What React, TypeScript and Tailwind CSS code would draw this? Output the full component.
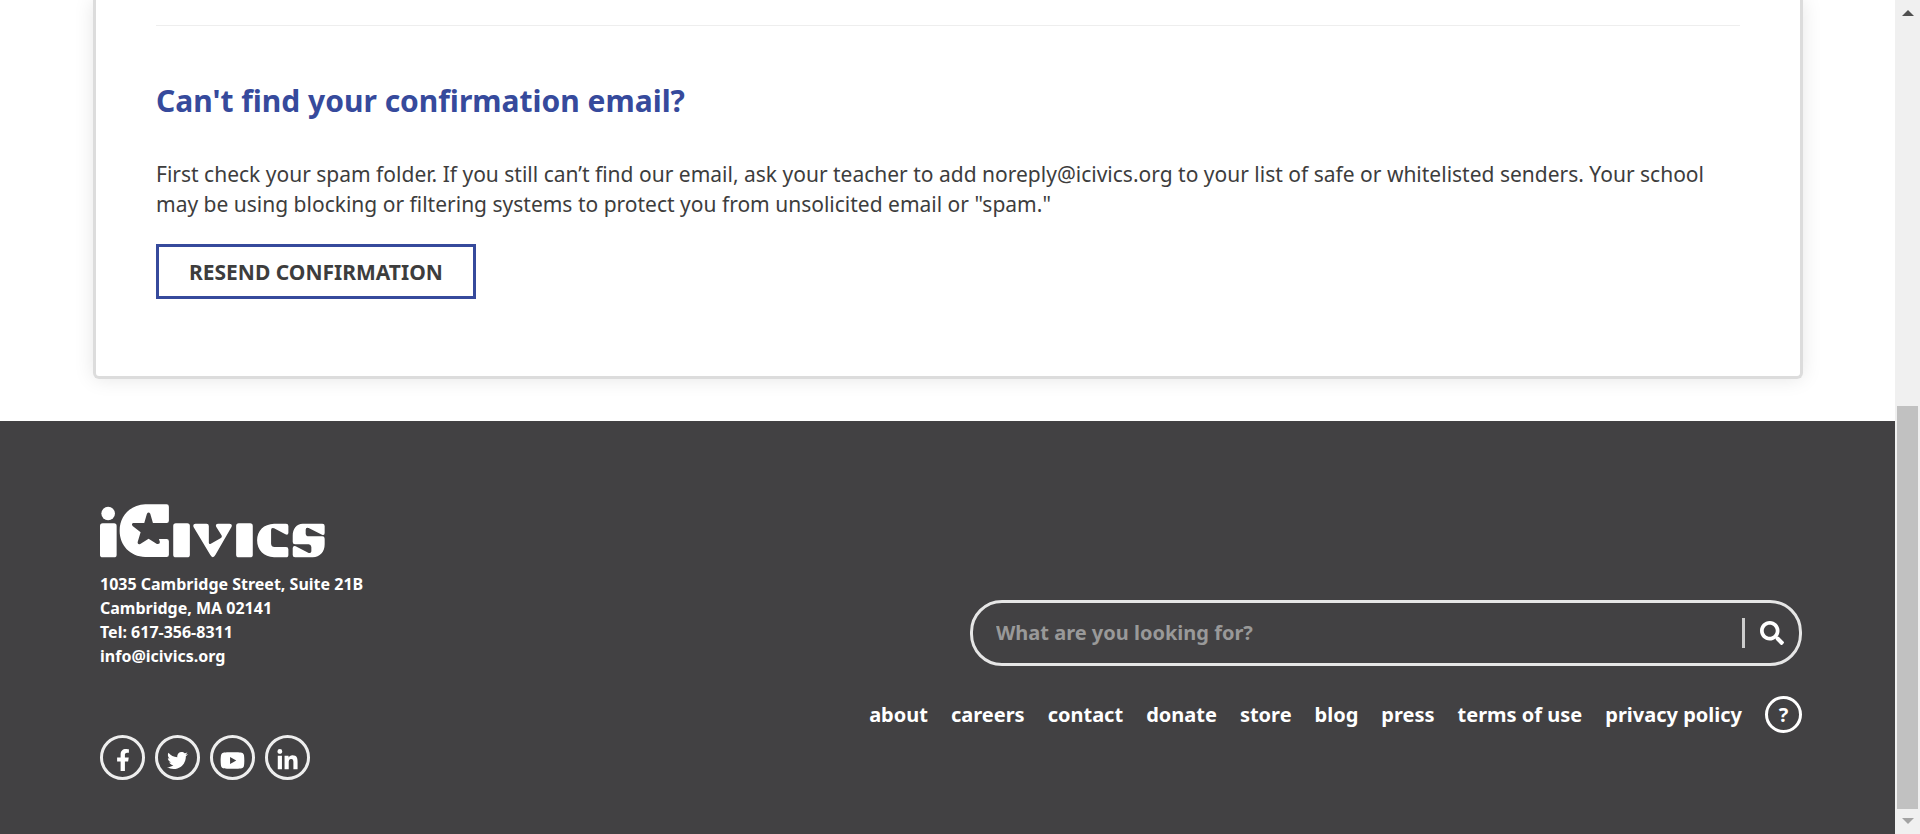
import React from "react";
import { FaFacebookF, FaTwitter, FaYoutube, FaLinkedinIn, FaSearch } from "react-icons/fa";

const navLinks = [
  "about",
  "careers",
  "contact",
  "donate",
  "store",
  "blog",
  "press",
  "terms of use",
  "privacy policy",
];

const socials = [
  { label: "Facebook", icon: <FaFacebookF className="size-[22px]" /> },
  { label: "Twitter", icon: <FaTwitter className="size-[21px]" /> },
  { label: "YouTube", icon: <FaYoutube className="size-[25px]" /> },
  { label: "LinkedIn", icon: <FaLinkedinIn className="size-[23px]" /> },
];

function Logo() {
  return (
    <svg viewBox="60 71 676 162" className="h-[54px] w-[225px]" fill="#fff" role="img" aria-label="iCivics">
      <circle cx="84.500" cy="99.500" r="20.500" />
      <rect x="60" y="129" width="50" height="102" rx="8" />
      <path
        fillRule="evenodd"
        d="M196 72H260Q267 72 267 79V121Q267 128 260 128H219L211 100Q206 93 201 100L193 128H160Q153 130 158 137L182 156L173 186Q173 194 181 191L206 175L231 191Q240 193 240 185L237 176H260Q267 176 267 183V223Q267 230 260 230H196C150 228 119 195 119 151C119 107 150 74 196 72Z"
      />
      <rect x="280" y="129" width="50" height="102" rx="8" />
      <path d="M347 130H380Q387 130 387 137V188Q388 193 393 190L422 174Q428 170 425 165L409 139Q406 130 414 130H449Q459 130 455 140L407 223Q399 238 391 223L341 140Q338 130 347 130Z" />
      <rect x="469" y="129" width="50" height="102" rx="8" />
      <path d="M583 130H619Q626 130 626 137V158Q625 166 617 162L583 144Q574 141 574 149V190Q575 200 584 200H619Q626 200 626 207V223Q626 231 619 231H583C552 230 532 209 532 180C532 151 552 131 583 130Z" />
      <path d="M669 130H728Q735 130 735 137V158Q735 166 727 163L687 143Q678 140 678 148V160Q679 168 687 168H728Q735 168 735 175V192C735 216 721 230 699 231H646Q639 231 639 224V203Q640 195 648 198L687 218Q695 220 695 213V200Q694 192 687 192H646Q639 192 639 185V166C639 145 650 131 669 130Z" />
    </svg>
  );
}

function Scrollbar() {
  return (
    <div aria-hidden="true" className="flex w-[25px] shrink-0 flex-col items-center bg-[#f0f0f0] pt-[10px] pb-[10px]">
      <svg viewBox="0 0 12 6" className="h-[6px] w-3" fill="#505050">
        <path d="M6 0L12 6H0Z" />
      </svg>
      <div className="grow-[390]" />
      <div className="w-[21px] grow-[403] bg-[#c1c1c1]" />
      <svg viewBox="0 0 12 6" className="mt-[9px] h-[6px] w-3" fill="#a3a3a3">
        <path d="M0 0H12L6 6Z" />
      </svg>
    </div>
  );
}

export default function App() {
  return (
    <div className="flex min-h-screen bg-white font-['Noto_Sans',sans-serif] text-[#3d3d3d]">
      <div className="flex min-w-0 grow flex-col">
        <main className="pr-[92px] pb-[42px] pl-[93px]">
          <section className="rounded-b-[6px] border-x-[3px] border-b-[3px] border-[#dcdcdc] px-[60px] pt-[25px] pb-[77px] shadow-[0_0_20px_rgba(0,0,0,0.1)]">
            <hr className="border-t border-[#eeeeee]" />
            <h2 className="mt-[55px] text-[30px] leading-[40px] font-bold text-[#364a9c]">
              Can't find your confirmation email?
            </h2>
            <p className="mt-[38px] text-[21px] leading-[30px]">
              First check your spam folder. If you still can’t find our email, ask your teacher to add
              noreply@icivics.org to your list of safe or whitelisted senders. Your school may be using blocking or
              filtering systems to protect you from unsolicited email or "spam."
            </p>
            <button
              type="button"
              className="mt-[25px] block h-[55px] border-[3px] border-[#364a9c] px-[30px] text-[21px] leading-[30px] font-bold"
            >
              RESEND CONFIRMATION
            </button>
          </section>
        </main>

        <footer className="flex grow justify-between bg-[#424143] pt-[83px] pr-[93px] pb-[54px] pl-[100px] font-bold text-white">
          <div>
            <a href="#home" className="block">
              <Logo />
            </a>
            <address className="mt-[14px] text-[16px] leading-6 not-italic">
              <div>1035 Cambridge Street, Suite 21B</div>
              <div>Cambridge, MA 02141</div>
              <div>Tel: 617-356-8311</div>
              <a href="mailto:info@icivics.org">info@icivics.org</a>
            </address>
            <div className="mt-[67px] flex gap-[10px]">
              {socials.map((s) => (
                <a
                  key={s.label}
                  href="#social"
                  aria-label={s.label}
                  className="flex size-[45px] items-center justify-center rounded-full border-[3px] border-[#eeeeee] pt-[5px]"
                >
                  {s.icon}
                </a>
              ))}
            </div>
          </div>

          <div className="flex flex-col items-end pt-[96px]">
            <form className="flex h-[66px] w-[832px] max-w-full items-center rounded-[32px] border-[3px] border-[#e6e6e6] pr-[15px] pl-[23px]">
              <input
                type="search"
                aria-label="Search"
                placeholder="What are you looking for?"
                className="min-w-0 grow bg-transparent text-[20px] leading-[30px] outline-none placeholder:text-[#999999]"
              />
              <span className="h-[30px] w-[3px] bg-[#cccccc]" />
              <button type="button" aria-label="Submit search" className="ml-[15px]">
                <FaSearch className="size-6" />
              </button>
            </form>
            <nav className="mt-[30px] flex items-center gap-[23px] text-[20px] leading-[30px]">
              {navLinks.map((l) => (
                <a key={l} href="#page">
                  {l}
                </a>
              ))}
              <a
                href="#help"
                aria-label="Help"
                className="flex size-[37px] items-center justify-center rounded-full border-[3px] border-white"
              >
                ?
              </a>
            </nav>
          </div>
        </footer>
      </div>
      <Scrollbar />
    </div>
  );
}
